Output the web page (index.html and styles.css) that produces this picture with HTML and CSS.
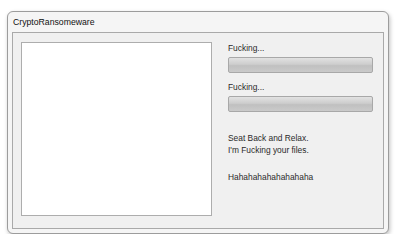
FILE: index.html
```html
<!DOCTYPE html>
<html lang="en">
<head>
    <meta charset="UTF-8">
    <meta name="viewport" content="width=device-width, initial-scale=1.0">
    <title>CryptoRansomeware</title>
    <link rel="stylesheet" href="styles.css">
</head>
<body>
    <div class="window">
        <div class="title">CryptoRansomeware</div>
        <div class="panel">
            <div class="canvas"></div>
            <div class="side">
                <div class="label">Fucking...</div>
                <div class="bar"></div>
                <div class="label second">Fucking...</div>
                <div class="bar"></div>
                <div class="message">
                    Seat Back and Relax.<br>
                    I'm Fucking your files.
                </div>
                <div class="laugh">Hahahahahahahahaha</div>
            </div>
        </div>
    </div>
</body>
</html>
```

FILE: styles.css
```css
body {
    font-family: 'Liberation Sans', Arial, sans-serif;
    background-color: #ffffff;
    margin: 0;
    color: #222;
}

.window {
    margin: 11px 0 0 7px;
    width: 382px;
    height: 223px;
    box-sizing: border-box;
    border: 1px solid #9c9c9c;
    border-radius: 6px;
    background-color: #f5f5f5;
    box-shadow: 1px 2px 4px rgba(0, 0, 0, 0.25);
    padding: 0 4px 4px 4px;
    display: flex;
    flex-direction: column;
}

.title {
    height: 20px;
    line-height: 20px;
    padding-left: 1px;
    font-size: 8.7px;
    color: #111;
}

.panel {
    flex: 1;
    border: 1px solid #a9a9a9;
    background-color: #f0f0f0;
    padding: 9px 0 0 8px;
    display: flex;
    gap: 16px;
}

.canvas {
    width: 191px;
    height: 174px;
    box-sizing: border-box;
    background-color: #fff;
    border: 1px solid #adadad;
}

.side {
    width: 145px;
    font-size: 8.4px;
    line-height: 12px;
    color: #2a2a2a;
}

.label.second {
    margin-top: 8px;
}

.bar {
    margin-top: 3px;
    height: 16px;
    box-sizing: border-box;
    border: 1px solid #a8a8a8;
    border-radius: 2px;
    background: linear-gradient(#e2e2e2, #cdcdcd 45%, #c0c0c0 55%, #cacaca);
}

.message {
    margin-top: 20px;
}

.laugh {
    margin-top: 15px;
}
```
